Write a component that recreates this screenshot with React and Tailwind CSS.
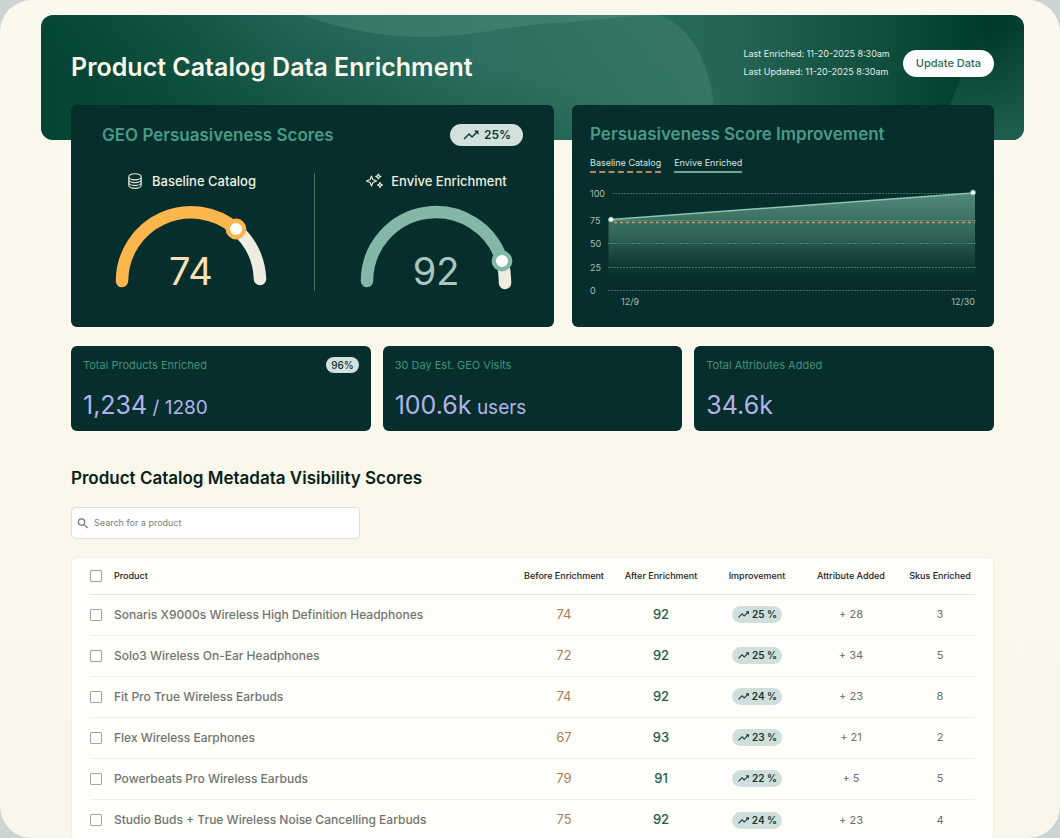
import { useState } from 'react';
import { MdSearch, MdTrendingUp } from 'react-icons/md';
import { HiOutlineCircleStack } from 'react-icons/hi2';

const products = [
  { name: 'Sonaris X9000s Wireless High Definition Headphones', before: 74, after: 92, improvement: 25, attributes: 28, skus: 3 },
  { name: 'Solo3 Wireless On-Ear Headphones', before: 72, after: 92, improvement: 25, attributes: 34, skus: 5 },
  { name: 'Fit Pro True Wireless Earbuds', before: 74, after: 92, improvement: 24, attributes: 23, skus: 8 },
  { name: 'Flex Wireless Earphones', before: 67, after: 93, improvement: 23, attributes: 21, skus: 2 },
  { name: 'Powerbeats Pro Wireless Earbuds', before: 79, after: 91, improvement: 22, attributes: 5, skus: 5 },
  { name: 'Studio Buds + True Wireless Noise Cancelling Earbuds', before: 75, after: 92, improvement: 24, attributes: 23, skus: 4 },
];

const gridLines = [
  { label: '100', y: 8 },
  { label: '75', y: 35 },
  { label: '50', y: 58 },
  { label: '25', y: 82 },
  { label: '0', y: 105 },
];

const SparklesIcon = ({ className }) => (
  <svg viewBox="0 0 18 16" fill="none" stroke="currentColor" strokeWidth="1.1" strokeLinejoin="round" className={className}>
    <path d="M6.5 3 L7.9 6.6 L11.6 8 L7.9 9.4 L6.5 13 L5.1 9.4 L1.4 8 L5.1 6.6 Z" />
    <path d="M13.3 0.9 L14.1 2.7 L15.9 3.5 L14.1 4.3 L13.3 6.1 L12.5 4.3 L10.7 3.5 L12.5 2.7 Z" />
    <path d="M15 9.5 L15.8 11.3 L17.5 12 L15.8 12.8 L15 14.6 L14.2 12.8 L12.5 12 L14.2 11.3 Z" />
  </svg>
);

const BannerArt = () => (
  <svg viewBox="0 0 983 125" preserveAspectRatio="none" aria-hidden="true" className="absolute inset-0 h-full w-full">
    <defs>
      <linearGradient id="base" gradientUnits="userSpaceOnUse" x1="0" y1="0" x2="983" y2="0">
        <stop offset="0" stopColor="#084936" />
        <stop offset="0.12" stopColor="#145545" />
        <stop offset="0.25" stopColor="#226456" />
        <stop offset="0.45" stopColor="#2d6f60" />
        <stop offset="0.62" stopColor="#286a59" />
        <stop offset="0.7" stopColor="#276556" />
        <stop offset="0.78" stopColor="#1a5948" />
        <stop offset="0.86" stopColor="#0f4d3d" />
        <stop offset="0.93" stopColor="#02412f" />
        <stop offset="0.97" stopColor="#003a29" />
        <stop offset="1" stopColor="#063f2f" />
      </linearGradient>
      <linearGradient id="shade" gradientUnits="userSpaceOnUse" x1="300" y1="10" x2="270" y2="125">
        <stop offset="0" stopColor="#003d2c" stopOpacity="0" />
        <stop offset="1" stopColor="#003d2c" stopOpacity="0.45" />
      </linearGradient>
      <linearGradient id="blob" gradientUnits="userSpaceOnUse" x1="480" y1="110" x2="670" y2="30">
        <stop offset="0" stopColor="#7fb39f" stopOpacity="0" />
        <stop offset="1" stopColor="#7fb39f" stopOpacity="0.2" />
      </linearGradient>
      <linearGradient id="corner" gradientUnits="userSpaceOnUse" x1="930" y1="20" x2="950" y2="125">
        <stop offset="0" stopColor="#1f5e4e" stopOpacity="0" />
        <stop offset="1" stopColor="#1f5e4e" />
      </linearGradient>
    </defs>
    <rect width="983" height="125" fill="url(#base)" />
    <rect width="983" height="125" fill="url(#shade)" />
    <path d="M440 0 H618 C650 12 668 45 673 92 L676 125 H380 Z" fill="url(#blob)" />
    <path d="M262 0 C300 14 340 22 384 22 C430 22 470 10 515 8 C550 6 590 0 618 0 Z" fill="#8fc4b0" fillOpacity="0.17" />
    <path d="M945 0 H983 V125 H895 Z" fill="url(#corner)" />
  </svg>
);

const Gauge = ({ id, icon, label, value, color, numberColor, knob, end }) => (
  <div className="flex flex-col items-center">
    <div className="flex h-4 items-center gap-2 text-[#eef0e2]">
      {icon}
      <h3 id={id} className="text-[13px] leading-4 font-medium">{label}</h3>
    </div>
    <div className="relative mt-3.5" role="img" aria-labelledby={id}>
      <svg viewBox="0 0 160 88" fill="none" className="h-[88px] w-40" strokeWidth="12.5" strokeLinecap="round">
        <path d={`M${knob.x} ${knob.y} A69 69 0 0 1 149 ${end}`} stroke="#eeeddf" />
        <path d={`M11 78 A69 69 0 0 1 ${knob.x} ${knob.y}`} stroke={color} />
        <circle cx={knob.x} cy={knob.y} r="8.2" fill="#fff" stroke={color} strokeWidth="4.4" />
      </svg>
      <span className={`absolute inset-x-0 bottom-0.5 text-center text-[38px] leading-9 ${numberColor}`}>{value}</span>
    </div>
  </div>
);

const ScoreChart = () => (
  <svg viewBox="0 0 386 124" className="mt-3 w-full overflow-visible" fontSize="9" fill="#a9bfb9">
    <defs>
      <linearGradient id="area" x1="0" y1="0" x2="0" y2="1">
        <stop offset="0" stopColor="#5a9582" stopOpacity="0.9" />
        <stop offset="0.45" stopColor="#3f7466" stopOpacity="0.75" />
        <stop offset="0.9" stopColor="#1c4d45" stopOpacity="0" />
      </linearGradient>
    </defs>
    <path d="M18.5 34.5 L385 8 V105 H18.5 Z" fill="url(#area)" />
    {gridLines.map((line) => (
      <g key={line.label}>
        <text x="0" y={line.y + 4}>{line.label}</text>
        <line
          x1={line.label === '100' ? 22 : 18}
          x2="386"
          y1={line.y + 0.5}
          y2={line.y + 0.5}
          stroke="#8fb5aa"
          strokeOpacity="0.45"
          strokeDasharray="2 1"
        />
      </g>
    ))}
    <line x1="24" x2="385" y1="37.5" y2="37.5" stroke="#c69a6a" strokeWidth="1.3" strokeDasharray="3 3" />
    <path d="M21 34.5 L383 8" stroke="#8cc4b2" strokeWidth="1.4" />
    <circle cx="21" cy="34.5" r="2.3" fill="#fff" stroke="#a5d3c4" />
    <circle cx="383" cy="7.5" r="2.3" fill="#fff" stroke="#a5d3c4" />
    <text x="31" y="120">12/9</text>
    <text x="385" y="120" textAnchor="end">12/30</text>
  </svg>
);

const StatCard = ({ label, value, suffix, badge }) => (
  <div className="h-[85px] rounded-md bg-[#052e2c] px-3 pt-[11px]">
    <div className="flex h-4 items-center justify-between">
      <h3 className="text-[11px] leading-4 text-[#42927c]">{label}</h3>
      {badge && (
        <span className="rounded-full bg-[#d2e1de] px-[5px] text-[10px] leading-4 font-medium text-[#0b3b33]">{badge}</span>
      )}
    </div>
    <p className="mt-4 text-[25px] leading-8 text-[#b4b2ec]">
      {value}
      {suffix && <span className="text-[19px]"> {suffix}</span>}
    </p>
  </div>
);

const App = () => {
  const [search, setSearch] = useState('');
  const [selected, setSelected] = useState([]);

  const filtered = products.filter((p) => p.name.toLowerCase().includes(search.toLowerCase()));
  const allSelected = selected.length === products.length;

  const toggle = (name) => {
    setSelected(selected.includes(name) ? selected.filter((n) => n !== name) : [...selected, name]);
  };

  const checkbox = 'block size-3 appearance-none rounded-[1px] border border-[#a3a5a2] checked:bg-[#1f6550]';

  return (
    <div className="h-screen bg-[#ccd5d4] font-['Inter',sans-serif]">
      <main className="h-full overflow-hidden rounded-[32px] bg-linear-to-b from-[#fbf8ed] to-[#f9f7ea] pt-[15px] pr-9 pl-[41px]">
        <header className="relative h-[125px] overflow-hidden rounded-xl">
          <BannerArt />
          <div className="relative flex h-24 items-center justify-between px-[30px]">
            <h1 className="pt-2 text-[25px] leading-8 font-semibold text-[#fbf8ec]">Product Catalog Data Enrichment</h1>
            <div className="flex items-center gap-[13px]">
              <div className="text-[9px] leading-[18px] text-[#e3eeea]">
                <p>Last Enriched: 11-20-2025 8:30am</p>
                <p>Last Updated: 11-20-2025 8:30am</p>
              </div>
              <button type="button" className="h-[27px] rounded-full bg-white px-[13px] text-[11px] font-medium text-[#2a6b57]">
                Update Data
              </button>
            </div>
          </div>
        </header>

        <div className="relative -mt-[35px] px-[30px]">
          {/* Scores */}
          <section className="grid grid-cols-[483fr_422fr] gap-[18px]">
            <div className="h-[222px] rounded-md bg-[#052e2c]">
              <div className="flex items-center justify-between px-[31px] pt-[18px]">
                <h2 className="text-[17px] leading-6 font-semibold text-[#4a9a85]">GEO Persuasiveness Scores</h2>
                <span className="flex h-[22px] items-center gap-1 rounded-full bg-[#d2e1de] px-3 text-xs font-semibold text-[#0b3b33]">
                  <MdTrendingUp className="size-[18px]" />
                  25%
                </span>
              </div>
              <div className="mt-[26px] grid grid-cols-[240fr_1px_236fr] gap-x-[3px]">
                <Gauge
                  id="baseline"
                  icon={<HiOutlineCircleStack className="size-[18px]" />}
                  label="Baseline Catalog"
                  value={74}
                  color="#ffb64c"
                  numberColor="text-[#f9e0b5]"
                  knob={{ x: 125, y: 26 }}
                  end={76}
                />
                <div className="h-[118px] bg-[#43796b]" />
                <Gauge
                  id="enriched"
                  icon={<SparklesIcon className="h-4 w-[18px]" />}
                  label="Envive Enrichment"
                  value={92}
                  color="#83b7a8"
                  numberColor="text-[#a8c6be]"
                  knob={{ x: 146, y: 58 }}
                  end={80}
                />
              </div>
            </div>

            <div className="h-[222px] rounded-md bg-[#052e2c] px-[18px] pt-[17px]">
              <h2 className="text-[17px] leading-6 font-semibold text-[#4a9a85]">Persuasiveness Score Improvement</h2>
              <div className="mt-[11px] flex gap-[13px] text-[9px] leading-3 text-[#dbe6e0]">
                <span className="border-b-2 border-dashed border-[#b58c60] pb-0.5">Baseline Catalog</span>
                <span className="border-b-2 border-[#6fa595] pb-0.5">Envive Enriched</span>
              </div>
              <ScoreChart />
            </div>
          </section>

          {/* Stats */}
          <section className="mt-[19px] grid grid-cols-3 gap-3">
            <StatCard label="Total Products Enriched" value="1,234" suffix="/ 1280" badge="96%" />
            <StatCard label="30 Day Est. GEO Visits" value="100.6k" suffix="users" />
            <StatCard label="Total Attributes Added" value="34.6k" />
          </section>

          {/* Products */}
          <h2 className="mt-[35px] text-[17px] leading-6 font-semibold text-[#071f1b]">Product Catalog Metadata Visibility Scores</h2>
          <label className="mt-[17px] flex h-8 w-[289px] items-center gap-1 rounded-sm border border-[#dcdee2] bg-white px-1">
            <MdSearch className="size-[15px] text-[#6d706e]" />
            <input
              type="text"
              aria-label="Search for a product"
              placeholder="Search for a product"
              value={search}
              onChange={(e) => setSearch(e.target.value)}
              className="w-full text-[9px] text-[#333] outline-none placeholder:text-[#7c7f7d]"
            />
          </label>

          <div className="mt-[18px] rounded-md border border-[#f1efe2] bg-[#fffefb] px-[18px]">
            <table className="w-full table-fixed text-center">
              <thead>
                <tr className="h-9 border-b border-[#e4e5e2] text-[9px] text-[#16211e]">
                  <th className="w-6">
                    <input
                      type="checkbox"
                      aria-label="Select all products"
                      checked={allSelected}
                      onChange={() => setSelected(allSelected ? [] : products.map((p) => p.name))}
                      className={checkbox}
                    />
                  </th>
                  <th className="text-left font-medium">Product</th>
                  <th className="w-[82px] font-medium whitespace-nowrap">Before Enrichment</th>
                  <th className="w-28 font-medium">After Enrichment</th>
                  <th className="w-20 font-medium">Improvement</th>
                  <th className="w-[108px] font-medium">Attribute Added</th>
                  <th className="w-[70px] font-medium">Skus Enriched</th>
                </tr>
              </thead>
              <tbody>
                {filtered.map((product) => (
                  <tr key={product.name} className="h-[41px] border-b border-[#eeefec] text-[11px] text-[#6a6f6c] last:border-b-0">
                    <td>
                      <input
                        type="checkbox"
                        aria-label={`Select ${product.name}`}
                        checked={selected.includes(product.name)}
                        onChange={() => toggle(product.name)}
                        className={checkbox}
                      />
                    </td>
                    <td className="text-left text-xs font-medium text-[#6f7471]">{product.name}</td>
                    <td className="text-[13px] text-[#ac7d52]">{product.before}</td>
                    <td className="text-[13px] font-medium text-[#1f5d4b]">{product.after}</td>
                    <td>
                      <span className="inline-flex h-[17px] items-center gap-0.5 rounded-full bg-[#d0dfdc] px-[5px] align-middle text-[10px] font-semibold text-[#12352f]">
                        <MdTrendingUp className="size-[13px]" />
                        {product.improvement} %
                      </span>
                    </td>
                    <td>+ {product.attributes}</td>
                    <td>{product.skus}</td>
                  </tr>
                ))}
              </tbody>
            </table>
          </div>
        </div>
      </main>
    </div>
  );
};

export default App;
